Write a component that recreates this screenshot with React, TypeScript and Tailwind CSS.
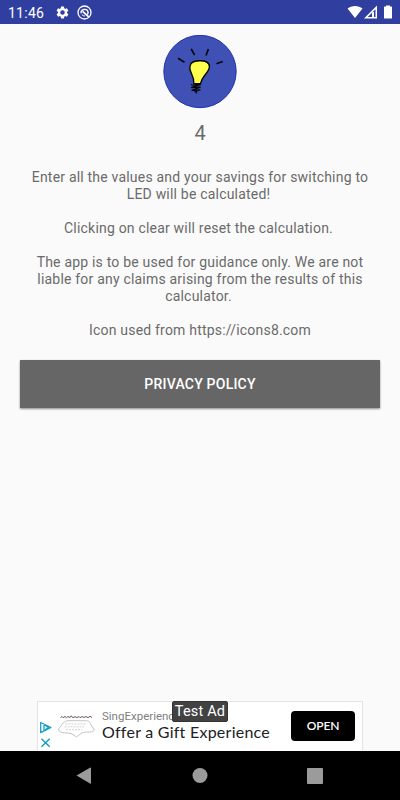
import React from 'react';

function StatusBar() {
  return (
    <header className="flex h-6 shrink-0 items-center bg-[#303f9f] text-white">
      <span className="ml-[8px] w-[46px] whitespace-nowrap pt-px text-[14px] leading-[22px] tracking-[0.25px]">11:46</span>
      <svg className="ml-[1px] h-[15px] w-[15px]" viewBox="0 0 24 24" fill="currentColor">
        <path d="M19.14 12.94c.04-.3.06-.61.06-.94 0-.32-.02-.64-.07-.94l2.03-1.58a.49.49 0 0 0 .12-.61l-1.92-3.32a.49.49 0 0 0-.59-.22l-2.39.96a7 7 0 0 0-1.62-.94l-.36-2.54A.48.48 0 0 0 13.92 2.4h-3.84a.47.47 0 0 0-.47.41l-.36 2.54c-.59.24-1.13.57-1.62.94l-2.39-.96a.48.48 0 0 0-.59.22L2.74 8.87a.47.47 0 0 0 .12.61l2.03 1.58a7 7 0 0 0 0 1.88l-2.03 1.58a.49.49 0 0 0-.12.61l1.92 3.32c.12.22.37.29.59.22l2.39-.96c.5.38 1.03.7 1.62.94l.36 2.54c.05.24.24.41.48.41h3.84c.24 0 .44-.17.47-.41l.36-2.54a7 7 0 0 0 1.62-.94l2.39.96c.22.08.47 0 .59-.22l1.92-3.32a.47.47 0 0 0-.12-.61zM12 15.6a3.6 3.6 0 1 1 0-7.2 3.6 3.6 0 0 1 0 7.2z" />
      </svg>
      <svg className="ml-[7px] h-[15px] w-[15px]" viewBox="0 0 15 15" fill="none" stroke="currentColor">
        <circle cx="7.5" cy="7.5" r="6.5" strokeWidth="1.300" />
        <path d="M4 8.200A3.600 3.600 0 0 1 11.100 7.200Q11.100 8.700 10.300 9.500" strokeWidth="1.400" />
        <path d="M5.600 6.300 11.700 11.900" strokeWidth="1.800" />
        <path d="M4.800 9.500Q6 11.100 8 11" strokeWidth="1" />
      </svg>
      <svg className="ml-auto h-6 w-[54px]" viewBox="346 0 54 24" fill="currentColor">
        <path d="M347.500 8.500C351.700 5 358.300 5 362.500 8.500L355 18Z" />
        <path fillRule="evenodd" d="M377 5.500V18.500H364ZM375.500 9.200 367.700 17H372V12H374V17H375.500Z" />
        <path d="M386 6.500V5.500h4v1h1.500q.5 0 .5.500v11q0 .5-.5.500h-7q-.5 0-.5-.5V7q0-.5.500-.5z" />
      </svg>
    </header>
  );
}

function BulbLogo() {
  return (
    <svg className="mt-[11px] h-[74px] w-[74px] shrink-0" viewBox="163 35 74 74">
      <circle cx="200" cy="71.500" r="36.200" fill="#3f51b5" stroke="#1526ad" strokeWidth=".9" />
      <g stroke="#080808" strokeWidth="1.700" fill="none">
        <path d="M178 58.200 184.500 62.200M191.200 48.800 194.600 55.200M208.400 49 206 55.500M216.400 63.700 222.700 61.500" />
      </g>
      <path d="M193.800 83.500C194.600 76 189.700 73.500 189.800 67.500C189.900 62 194.500 60.600 200 60.600C206 60.600 209.500 62.600 209.400 66.700C209.300 72.500 202 75.800 200.600 83.600Z" fill="#ffff4d" stroke="#080808" strokeWidth="1.400" strokeLinejoin="round" />
      <path d="M190.800 63.500C194.500 60 205 59.500 208.400 63.500" fill="none" stroke="#080808" strokeWidth="1.200" />
      <path d="M190.800 84.500C194 86.200 197 84 200.600 84.300L191.500 87.500 200.200 87.200 192 90.300 200 90 194.500 91.700M194.500 91.300 196.500 91.700 196 93.500" fill="none" stroke="#080808" strokeWidth="1.300" strokeLinejoin="round" />
    </svg>
  );
}

function AdBanner() {
  return (
    <section className="relative mx-auto flex h-[50px] w-[326px] shrink-0 border border-b-0 border-[#e4e4e4] bg-white">
      <svg className="h-[49px] w-[62px] shrink-0" viewBox="38 702 62 49" fill="none">
        <g stroke="#169fc5" strokeWidth="1.300">
          <path d="M40.700 722.500V732.700L51 727.500ZM44 725V730.400M45 725.200 48.500 727.500 45 729.700" strokeLinejoin="round" />
          <path d="M41.500 738.700 49.700 746.700M49.700 738.700 41.500 746.700" strokeWidth="1.500" />
        </g>
        <path d="M60.500 717.500 62 716.500 63 717.700 65 716.500 66.500 717.600 68 716.500 70 717.600 71 715.800 73 717.700 75 716.600 77 717.600 79 716.500 80 717.700 82 716.600 84 717.500 86 716.500 88 717.700 90 716.300 92 717.500" stroke="#705c5c" strokeWidth="1" />
        <path d="M62 724C65 722 65 720.500 69 720.700H85C89 720.500 90 722.500 91 725L94.500 730C91 734 85 730.500 81 733.500L76.500 737 73 734.500C68 731.500 61 734.500 58.500 730C58.500 727 62 727 62 724Z" stroke="#b5b5b5" strokeWidth=".8" />
        <path d="M65.500 724H86M64.500 726.800H84M66 729.700H82" stroke="#bbb" strokeWidth=".7" strokeDasharray="2 1" />
      </svg>
      <div className="flex w-[190px] flex-col whitespace-nowrap pl-[2px] pt-[6px]">
        <span className="text-[11.500px] leading-[16px] text-[#808080]">SingExperience</span>
        <span className="font-['Lato'] text-[16px] leading-[16px] tracking-[0.25px] text-[#202124]">Offer a Gift Experience</span>
      </div>
      <button className="ml-[1px] mt-[9px] h-[30px] w-[64px] rounded-[4px] bg-black pb-px font-['Lato'] text-[12px] font-semibold tracking-[-0.1px] text-white">OPEN</button>
      <span className="absolute left-[134px] top-[-1px] flex h-[21px] w-[56px] items-center justify-center whitespace-nowrap rounded-[2px] border border-[#333] bg-[#424242] text-[14.500px] leading-[20px] tracking-[0.2px] text-white">Test Ad</span>
    </section>
  );
}

export default function App() {
  return (
    <div className="flex h-[800px] w-[400px] flex-col overflow-hidden bg-[#fafafa] font-['Roboto',sans-serif] text-[#6a6a6a]">
      <StatusBar />
      <main className="flex flex-1 flex-col items-center">
        <BulbLogo />
        <p className="mt-[12px] text-[20px] leading-[24px]">4</p>
        <div className="mt-[24px] whitespace-pre text-center text-[14px] leading-[17px] tracking-[0.2px]">
          <p>Enter all the values and your savings for switching to</p>
          <p className="pr-[3px]">LED will be calculated!</p>
          <p className="mt-[17px] pr-[3px]">Clicking on clear will reset the calculation.</p>
          <p className="mt-[17px]">The app is to be used for guidance only. We are not</p>
          <p>liable for any claims arising from the results of this</p>
          <p className="pr-[3px]">calculator.</p>
          <p className="mt-[17px]">Icon used from https://icons8.com</p>
        </div>
        <button className="mt-[21px] h-[48px] w-[360px] bg-[#666] pt-px text-[14px] font-medium tracking-[0.22px] text-white shadow-[0_1px_2px_rgba(0,0,0,0.45)]">PRIVACY POLICY</button>
      </main>
      <AdBanner />
      <nav className="flex h-[49px] shrink-0 items-center bg-black">
        <svg className="h-[49px] w-full" viewBox="0 751 400 49" fill="#9b9b9b">
          <path d="M76.500 775.500 90 767.700Q91 767.200 91 768.200V783Q91 784 90 783.500Z" />
          <circle cx="200" cy="775.500" r="7.500" />
          <rect x="307" y="768" width="16" height="16" rx="1" />
        </svg>
      </nav>
    </div>
  );
}
